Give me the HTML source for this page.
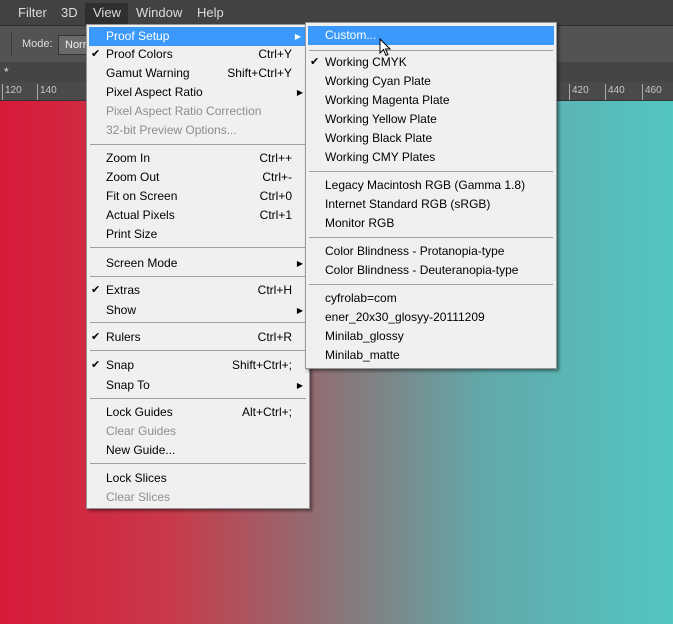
<!DOCTYPE html><html><head><style>
body{margin:0;width:673px;height:624px;overflow:hidden;position:relative;font-family:"Liberation Sans",sans-serif;font-size:12px;background:#535353}
.abs{position:absolute}
.mb{left:0;top:0;width:673px;height:25px;background:#424242;color:#dcdcdc;font-size:13px}
.mb span{position:absolute;top:5px}
.tb{left:0;top:25px;width:673px;height:36px;background:#535353;border-top:1px solid #2e2e2e;border-bottom:1px solid #2e2e2e}
.tab{left:0;top:62px;width:673px;height:20px;background:#454545}
.ruler{left:0;top:82px;width:673px;height:18px;background:#4a4a4a;color:#c8c8c8;font-size:10px;border-bottom:1px solid #333}
.canvas{left:0;top:101px;width:673px;height:523px;background:linear-gradient(90deg,#d8193a 0%,#c9394a 25%,#8a7578 50%,#62a9aa 72%,#52c6c2 100%)}
.menu{background:#f0f0f0;border:1px solid #979797;box-shadow:2px 2px 3px rgba(0,0,0,.45);color:#000}
.it{position:absolute;left:0;right:0;height:19px;line-height:19px}
.it .t{position:absolute}
.it .k{position:absolute;right:17px}
.it .a{position:absolute;right:6px;font-size:8px}
.it .c{position:absolute;font-size:11px}
.dis{color:#8d8d8d}
.sep{position:absolute;height:1px;background:#a0a0a0}
.hl{background:#3b99fc;color:#fff}
</style></head><body>
<div class="abs canvas"></div>
<div class="abs mb"><span style="left:18px">Filter</span><span style="left:61px">3D</span><span style="left:93px">View</span><span style="left:136px">Window</span><span style="left:197px">Help</span>
<div style="position:absolute;left:85px;top:3px;width:43px;height:22px;background:#2f2f2f"></div><span style="left:93px">View</span></div>
<div class="abs tb"><span class="abs" style="left:22px;top:12px;color:#ddd;font-size:11px">Mode:</span><div class="abs" style="left:58px;top:9px;width:40px;height:18px;background:#6a6a6a;border:1px solid #333;color:#eee;font-size:11px;line-height:18px;padding-left:6px">Norm</div><div class="abs" style="left:11px;top:6px;width:1px;height:24px;background:#3a3a3a"></div></div>
<div class="abs tab"><span class="abs" style="left:4px;top:3px;color:#ddd">*</span></div>
<div class="abs ruler"><span class="abs" style="left:5px;top:3px">120</span><span class="abs" style="left:40px;top:3px">140</span><span class="abs" style="left:572px;top:3px">420</span><span class="abs" style="left:608px;top:3px">440</span><span class="abs" style="left:645px;top:3px">460</span>
<div class="abs" style="left:2px;top:2px;width:1px;height:16px;background:#aaa"></div><div class="abs" style="left:37px;top:2px;width:1px;height:16px;background:#aaa"></div><div class="abs" style="left:569px;top:2px;width:1px;height:16px;background:#aaa"></div><div class="abs" style="left:605px;top:2px;width:1px;height:16px;background:#aaa"></div><div class="abs" style="left:642px;top:2px;width:1px;height:16px;background:#aaa"></div></div>

<div class="abs menu" style="left:86px;top:24px;width:222px;height:483px">
<div class="it hl" style="top:2px;left:2px;right:2px"><span class="t" style="left:17px">Proof Setup</span><span class="a" style="right:6px">▶</span></div>
<div class="it" style="top:20px"><span class="c" style="left:4px">✔</span><span class="t" style="left:19px">Proof Colors</span><span class="k">Ctrl+Y</span></div>
<div class="it" style="top:39px"><span class="t" style="left:19px">Gamut Warning</span><span class="k">Shift+Ctrl+Y</span></div>
<div class="it" style="top:58px"><span class="t" style="left:19px">Pixel Aspect Ratio</span><span class="a">▶</span></div>
<div class="it dis" style="top:77px"><span class="t" style="left:19px">Pixel Aspect Ratio Correction</span></div>
<div class="it dis" style="top:96px"><span class="t" style="left:19px">32-bit Preview Options...</span></div>
<div class="sep" style="top:119px;left:3px;right:3px"></div>
<div class="it" style="top:124px"><span class="t" style="left:19px">Zoom In</span><span class="k">Ctrl++</span></div>
<div class="it" style="top:143px"><span class="t" style="left:19px">Zoom Out</span><span class="k">Ctrl+-</span></div>
<div class="it" style="top:162px"><span class="t" style="left:19px">Fit on Screen</span><span class="k">Ctrl+0</span></div>
<div class="it" style="top:181px"><span class="t" style="left:19px">Actual Pixels</span><span class="k">Ctrl+1</span></div>
<div class="it" style="top:200px"><span class="t" style="left:19px">Print Size</span></div>
<div class="sep" style="top:222px;left:3px;right:3px"></div>
<div class="it" style="top:229px"><span class="t" style="left:19px">Screen Mode</span><span class="a">▶</span></div>
<div class="sep" style="top:251px;left:3px;right:3px"></div>
<div class="it" style="top:256px"><span class="c" style="left:4px">✔</span><span class="t" style="left:19px">Extras</span><span class="k">Ctrl+H</span></div>
<div class="it" style="top:276px"><span class="t" style="left:19px">Show</span><span class="a">▶</span></div>
<div class="sep" style="top:297px;left:3px;right:3px"></div>
<div class="it" style="top:303px"><span class="c" style="left:4px">✔</span><span class="t" style="left:19px">Rulers</span><span class="k">Ctrl+R</span></div>
<div class="sep" style="top:325px;left:3px;right:3px"></div>
<div class="it" style="top:331px"><span class="c" style="left:4px">✔</span><span class="t" style="left:19px">Snap</span><span class="k">Shift+Ctrl+;</span></div>
<div class="it" style="top:351px"><span class="t" style="left:19px">Snap To</span><span class="a">▶</span></div>
<div class="sep" style="top:373px;left:3px;right:3px"></div>
<div class="it" style="top:378px"><span class="t" style="left:19px">Lock Guides</span><span class="k">Alt+Ctrl+;</span></div>
<div class="it dis" style="top:397px"><span class="t" style="left:19px">Clear Guides</span></div>
<div class="it" style="top:416px"><span class="t" style="left:19px">New Guide...</span></div>
<div class="sep" style="top:438px;left:3px;right:3px"></div>
<div class="it" style="top:444px"><span class="t" style="left:19px">Lock Slices</span></div>
<div class="it dis" style="top:463px"><span class="t" style="left:19px">Clear Slices</span></div>
</div>

<div class="abs menu" style="left:305px;top:22px;width:250px;height:345px">
<div class="it hl" style="top:3px;left:2px;right:2px"><span class="t" style="left:17px">Custom...</span></div>
<div class="sep" style="top:27px;left:3px;right:3px"></div>
<div class="it" style="top:30px"><span class="c" style="left:4px">✔</span><span class="t" style="left:19px">Working CMYK</span></div>
<div class="it" style="top:49px"><span class="t" style="left:19px">Working Cyan Plate</span></div>
<div class="it" style="top:68px"><span class="t" style="left:19px">Working Magenta Plate</span></div>
<div class="it" style="top:87px"><span class="t" style="left:19px">Working Yellow Plate</span></div>
<div class="it" style="top:106px"><span class="t" style="left:19px">Working Black Plate</span></div>
<div class="it" style="top:125px"><span class="t" style="left:19px">Working CMY Plates</span></div>
<div class="sep" style="top:148px;left:3px;right:3px"></div>
<div class="it" style="top:153px"><span class="t" style="left:19px">Legacy Macintosh RGB (Gamma 1.8)</span></div>
<div class="it" style="top:172px"><span class="t" style="left:19px">Internet Standard RGB (sRGB)</span></div>
<div class="it" style="top:191px"><span class="t" style="left:19px">Monitor RGB</span></div>
<div class="sep" style="top:214px;left:3px;right:3px"></div>
<div class="it" style="top:219px"><span class="t" style="left:19px">Color Blindness - Protanopia-type</span></div>
<div class="it" style="top:238px"><span class="t" style="left:19px">Color Blindness - Deuteranopia-type</span></div>
<div class="sep" style="top:261px;left:3px;right:3px"></div>
<div class="it" style="top:266px"><span class="t" style="left:19px">cyfrolab=com</span></div>
<div class="it" style="top:285px"><span class="t" style="left:19px">ener_20x30_glosyy-20111209</span></div>
<div class="it" style="top:304px"><span class="t" style="left:19px">Minilab_glossy</span></div>
<div class="it" style="top:323px"><span class="t" style="left:19px">Minilab_matte</span></div>
</div>
<svg class="abs" style="left:379px;top:38px" width="14" height="20" viewBox="0 0 14 20"><path d="M1 1 L1 15 L4.5 11.5 L7 17.5 L9 16.5 L6.5 11 L11 11 Z" fill="#fff" stroke="#000" stroke-width="1"/></svg>
</body></html>
